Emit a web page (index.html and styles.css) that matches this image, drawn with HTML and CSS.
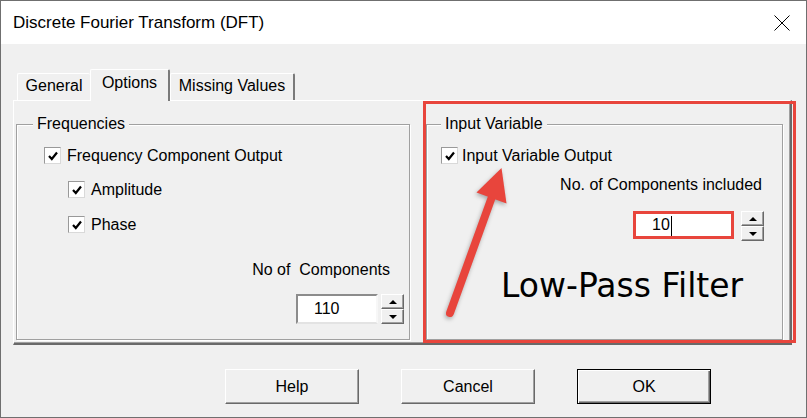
FILE: index.html
```html
<!DOCTYPE html>
<html lang="en">
<head>
    <meta charset="UTF-8">
    <meta name="viewport" content="width=device-width, initial-scale=1.0">
    <title>Discrete Fourier Transform (DFT)</title>
    <link rel="stylesheet" href="styles.css">
</head>
<body>
    <div class="dialog">
        <div class="titlebar">
            <span class="title">Discrete Fourier Transform (DFT)</span>
            <svg class="close" width="16" height="16" viewBox="0 0 16 16">
                <path d="M0.5 0.5 L15.5 15.5 M15.5 0.5 L0.5 15.5" stroke="#000" stroke-width="1" fill="none"/>
            </svg>
        </div>

        <div class="content">
            <div class="tabs">
                <div class="tab tab-general">General</div>
                <div class="tab tab-options active">Options</div>
                <div class="tab tab-missing">Missing Values</div>
            </div>

            <div class="panel">
                <fieldset class="group group-freq">
                    <legend>Frequencies</legend>
                    <label class="check row-1">
                        <span class="box"><svg width="10" height="10" viewBox="0 0 10 10"><polyline points="1,5 3.8,8 9,1.5" fill="none" stroke="#000" stroke-width="2.2"/></svg></span>
                        Frequency Component Output
                    </label>
                    <label class="check sub row-2">
                        <span class="box"><svg width="10" height="10" viewBox="0 0 10 10"><polyline points="1,5 3.8,8 9,1.5" fill="none" stroke="#000" stroke-width="2.2"/></svg></span>
                        Amplitude
                    </label>
                    <label class="check sub row-3">
                        <span class="box"><svg width="10" height="10" viewBox="0 0 10 10"><polyline points="1,5 3.8,8 9,1.5" fill="none" stroke="#000" stroke-width="2.2"/></svg></span>
                        Phase
                    </label>
                    <div class="field-label freq-label">No of&nbsp; Components</div>
                    <div class="spin freq-spin">
                        <div class="edit">110</div>
                        <div class="arrows">
                            <span class="arrow-btn"><i class="tri up"></i></span>
                            <span class="arrow-btn"><i class="tri down"></i></span>
                        </div>
                    </div>
                </fieldset>

                <fieldset class="group group-input">
                    <legend>Input Variable</legend>
                    <label class="check row-1">
                        <span class="box"><svg width="10" height="10" viewBox="0 0 10 10"><polyline points="1,5 3.8,8 9,1.5" fill="none" stroke="#000" stroke-width="2.2"/></svg></span>
                        Input Variable Output
                    </label>
                    <div class="field-label input-label">No. of Components included</div>
                    <div class="spin input-spin">
                        <div class="edit edit-marked">10<span class="caret"></span></div>
                        <div class="arrows">
                            <span class="arrow-btn"><i class="tri up"></i></span>
                            <span class="arrow-btn"><i class="tri down"></i></span>
                        </div>
                    </div>
                    <div class="note">Low-Pass Filter</div>
                </fieldset>

                <!-- red frame around the input variable group -->
                <div class="marker"></div>
            </div>

            <div class="buttons">
                <button class="btn">Help</button>
                <button class="btn">Cancel</button>
                <button class="btn btn-default">OK</button>
            </div>
        </div>

        <!-- red pointer towards the checkbox -->
        <svg class="pointer" width="90" height="170" viewBox="430 155 90 170">
            <line x1="450" y1="313" x2="493" y2="194" stroke="#e8453c" stroke-width="8" stroke-linecap="round"/>
            <polygon points="501.5,168 476.5,192.6 506.5,203.4" fill="#e8453c"/>
        </svg>
    </div>
</body>
</html>
```

FILE: styles.css
```css
* {
    box-sizing: border-box;
}

body {
    margin: 0;
    font-family: "Liberation Sans", Arial, sans-serif;
    font-size: 16px;
    color: #000;
    background-color: #f0f0f0;
}

.dialog {
    position: relative;
    width: 807px;
    height: 418px;
    border: 1px solid #6f6f6f;
    background-color: #f0f0f0;
}

/* title bar */
.titlebar {
    height: 43px;
    background-color: #fff;
    display: flex;
    align-items: center;
    justify-content: space-between;
    padding: 0 16px 0 12px;
}

.title {
    font-size: 17px;
}

.content {
    padding: 25px 13px 0 12px;
}

/* tabs */
.tabs {
    display: flex;
    align-items: flex-start;
    height: 31px;
    padding-left: 4px;
}

.tab {
    height: 27px;
    margin-top: 4px;
    padding-top: 3px;
    line-height: 18px;
    text-align: center;
    border-top: 1px solid #fff;
    border-left: 1px solid #fff;
    border-right: 2px solid #7a7a7a;
    border-radius: 2px 2px 0 0;
    background-color: #f0f0f0;
}

.tab-general {
    width: 73px;
    border-right: none;
}

.tab-options {
    width: 80px;
}

.tab-missing {
    width: 125px;
}

.tab.active {
    position: relative;
    z-index: 1;
    height: 32px;
    margin-top: 0;
    padding-top: 4px;
}

/* tab page */
.panel {
    position: relative;
    width: 779px;
    height: 245px;
    border-top: 1px solid #fff;
    border-left: 1px solid #fff;
    border-right: 2px solid #696969;
    border-bottom: 2px solid #696969;
    box-shadow: inset -1px -1px 0 #a0a0a0;
    display: grid;
    grid-template-columns: 394px 357px;
    column-gap: 16px;
    padding: 14px 0 3px 2px;
}

.group {
    margin: 0;
    padding: 0;
    min-width: 0;
    border: 1px solid #a0a0a0;
    box-shadow: inset 1px 1px 0 #fff, 1px 1px 0 #fff;
}

.group legend {
    padding: 0 4px;
    line-height: 18px;
    background-color: #f0f0f0;
}

.group-freq {
    padding-left: 27px;
}

.group-freq legend {
    margin-left: -11px;
}

.group-input {
    padding-left: 14px;
}

.group-input legend {
    margin-left: 0;
}

/* checkboxes */
.check {
    display: flex;
    align-items: center;
    gap: 6px;
    height: 17px;
}

.check.sub {
    margin-left: 24px;
}

.row-1 {
    margin-top: 14px;
}

.row-2 {
    margin-top: 17px;
}

.row-3 {
    margin-top: 18px;
}

.box {
    width: 17px;
    height: 17px;
    flex: none;
    display: flex;
    align-items: center;
    justify-content: center;
    background-color: #fff;
    border: 1px solid;
    border-color: #999 #d9d9d9 #d9d9d9 #999;
}

.group-input .box {
    margin-right: -2px;
}

/* labels and spin boxes */
.field-label {
    line-height: 18px;
    text-align: right;
}

.freq-label {
    margin-top: 28px;
    margin-right: 19px;
}

.input-label {
    margin-top: 12px;
    margin-right: 20px;
}

.spin {
    display: flex;
    justify-content: flex-end;
    gap: 3px;
    height: 30px;
}

.freq-spin {
    margin-top: 15px;
    margin-right: 5px;
}

.input-spin {
    margin-top: 17px;
    margin-right: 18px;
}

.edit {
    width: 82px;
    height: 30px;
    padding-left: 16px;
    line-height: 26px;
    background-color: #fff;
    border: 2px solid;
    border-color: #8c8c8c #f7f7f7 #e3e3e3 #8c8c8c;
}

.edit-marked {
    width: 101px;
    height: 28px;
    margin-right: 4px;
    border: 3px solid #e8453c;
    line-height: 22px;
}

.caret {
    display: inline-block;
    width: 1px;
    height: 20px;
    margin-left: 1px;
    vertical-align: middle;
    background-color: #000;
}

.arrows {
    display: flex;
    flex-direction: column;
    width: 23px;
}

.arrow-btn {
    height: 15px;
    display: flex;
    align-items: center;
    justify-content: center;
    border: 1px solid;
    border-color: #fff #696969 #696969 #fff;
    box-shadow: inset -1px -1px 0 #a0a0a0;
}

.tri {
    width: 0;
    height: 0;
    border-left: 4px solid transparent;
    border-right: 4px solid transparent;
}

.tri.up {
    border-bottom: 4px solid #000;
}

.tri.down {
    border-top: 4px solid #000;
}

.note {
    margin: 28px 0 0 60px;
    font-family: "DejaVu Sans", Verdana, sans-serif;
    font-size: 33px;
    line-height: 33px;
}

.marker {
    position: absolute;
    left: 409px;
    top: 0;
    width: 373px;
    height: 242px;
    border: 3px solid #e8453c;
}

/* dialog buttons */
.buttons {
    display: flex;
    gap: 42px;
    margin-top: 24px;
    padding-left: 212px;
}

.btn {
    width: 134px;
    height: 35px;
    padding: 0;
    font-family: inherit;
    font-size: 16px;
    color: #000;
    background-color: #f0f0f0;
    border: 1px solid;
    border-color: #fff #696969 #696969 #fff;
    box-shadow: inset -1px -1px 0 #a0a0a0;
}

.btn-default {
    border-color: #000;
    box-shadow: inset 1px 1px 0 #fff, inset -1px -1px 0 #696969, inset -2px -2px 0 #a0a0a0;
}

.pointer {
    position: absolute;
    left: 429px;
    top: 154px;
    filter: drop-shadow(-1px 2px 2px rgba(0, 0, 0, 0.3));
}
```
